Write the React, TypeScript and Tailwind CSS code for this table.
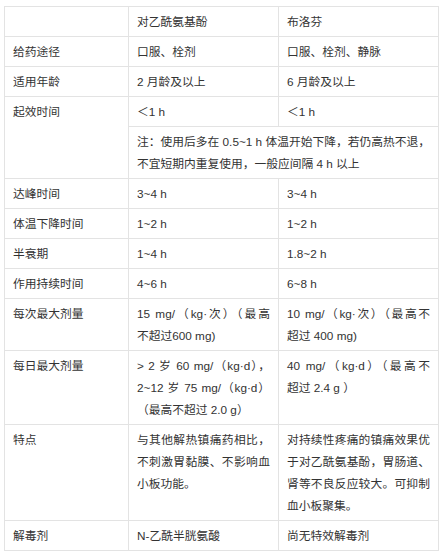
// each cell is a list of lines, as the reference wraps them; all lines but the last are justified
const rows: { label: string; a: string[]; b: string[] }[] = [
  { label: '达峰时间', a: ['3~4 h'], b: ['3~4 h'] },
  { label: '体温下降时间', a: ['1~2 h'], b: ['1~2 h'] },
  { label: '半衰期', a: ['1~4 h'], b: ['1.8~2 h'] },
  { label: '作用持续时间', a: ['4~6 h'], b: ['6~8 h'] },
  { label: '每次最大剂量', a: ['15 mg/（kg·次）（最高', '不超过600 mg)'], b: ['10 mg/（kg·次）（最高不', '超过 400 mg)'] },
  {
    label: '每日最大剂量',
    a: ['> 2 岁 60 mg/（kg·d），', '2~12 岁 75 mg/（kg·d）', '（最高不超过 2.0 g）'],
    b: ['40 mg/（kg·d）（最高不', '超过 2.4 g ）'],
  },
  {
    label: '特点',
    a: ['与其他解热镇痛药相比，', '不刺激胃黏膜、不影响血', '小板功能。'],
    b: ['对持续性疼痛的镇痛效果优', '于对乙酰氨基酚，胃肠道、', '肾等不良反应较大。可抑制', '血小板聚集。'],
  },
  { label: '解毒剂', a: ['N-乙酰半胱氨酸'], b: ['尚无特效解毒剂'] },
];

const cell = 'border border-[#e3e3e3] align-top px-2 pt-[4px] pb-[3px]';

function Lines({ lines }: { lines: string[] }) {
  return (
    <>
      {lines.map((l, i) => (
        <span
          key={i}
          className={i < lines.length - 1 ? 'block whitespace-nowrap [text-align-last:justify]' : 'block whitespace-nowrap'}
        >
          {l}
        </span>
      ))}
    </>
  );
}

export default function App() {
  return (
    <div
      className="min-h-[554px] w-[443px] bg-white pt-[6px] pl-[4px] text-[11.75px] leading-[22px] text-[#333]"
      style={{ fontFamily: '"Liberation Sans", "Noto Sans CJK SC", sans-serif' }}
    >
      <table className="w-[434px] table-fixed border-collapse">
        <colgroup>
          <col className="w-[124px]" />
          <col className="w-[150px]" />
          <col className="w-[160px]" />
        </colgroup>
        <tbody>
          <tr>
            <td className={cell}></td>
            <td className={cell}>对乙酰氨基酚</td>
            <td className={cell}>布洛芬</td>
          </tr>
          <tr>
            <td className={cell}>给药途径</td>
            <td className={cell}>口服、栓剂</td>
            <td className={cell}>口服、栓剂、静脉</td>
          </tr>
          <tr>
            <td className={cell}>适用年龄</td>
            <td className={cell}>2 月龄及以上</td>
            <td className={cell}>6 月龄及以上</td>
          </tr>
          <tr>
            <td className={cell} rowSpan={2}>起效时间</td>
            <td className={cell}>＜1 h</td>
            <td className={cell}>＜1 h</td>
          </tr>
          <tr>
            <td className={cell} colSpan={2}>
              <Lines lines={['注：使用后多在 0.5~1 h 体温开始下降，若仍高热不退，', '不宜短期内重复使用，一般应间隔 4 h 以上']} />
            </td>
          </tr>
          {rows.map((r) => (
            <tr key={r.label}>
              <td className={cell}>{r.label}</td>
              <td className={cell}>
                <Lines lines={r.a} />
              </td>
              <td className={cell}>
                <Lines lines={r.b} />
              </td>
            </tr>
          ))}
        </tbody>
      </table>
    </div>
  );
}
